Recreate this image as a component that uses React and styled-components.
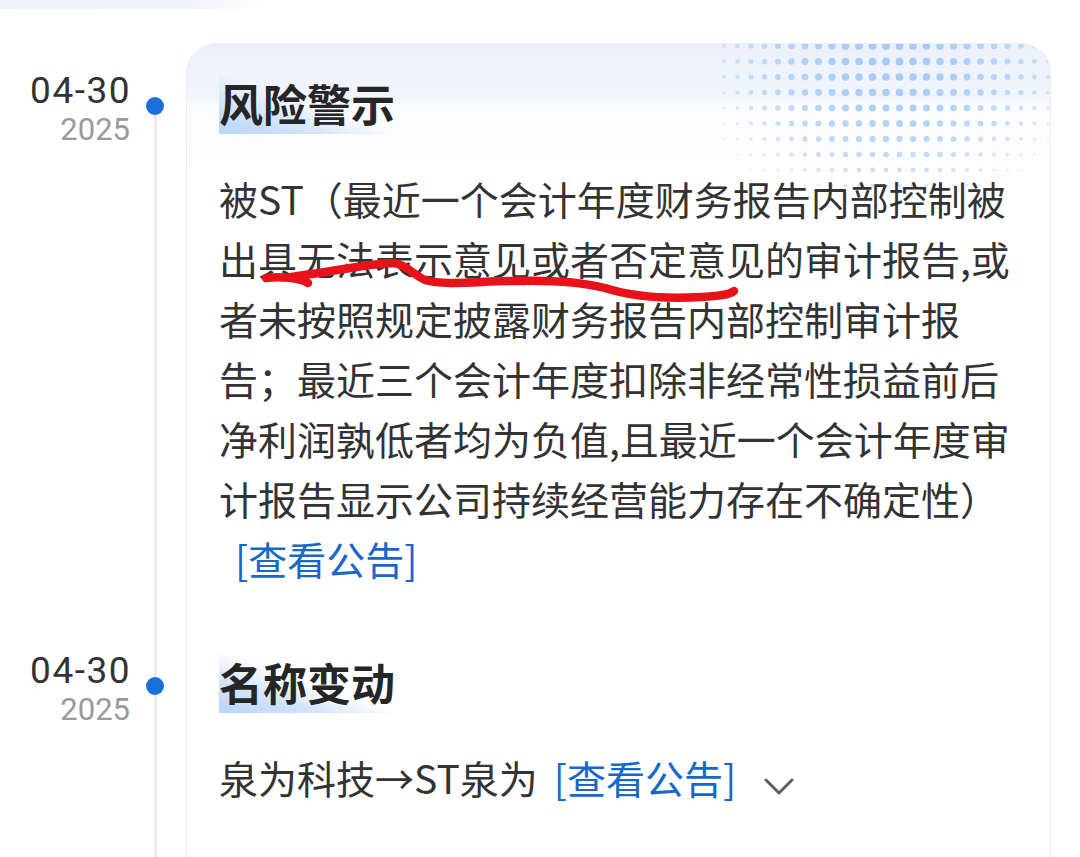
import styled, { createGlobalStyle } from 'styled-components';

const GlobalStyle = createGlobalStyle`
  html, body {
    margin: 0;
    padding: 0;
    background: #ffffff;
  }
  body {
    font-family: "Noto Sans CJK SC", "Noto Sans", sans-serif;
    color: #333333;
  }
`;

const events = [
  {
    day: '04-30',
    year: '2025',
    title: '风险警示',
    text:
      '被ST（最近一个会计年度财务报告内部控制被出具无法表示意见或者否定意见的审计报告,或者未按照规定披露财务报告内部控制审计报告；最近三个会计年度扣除非经常性损益前后净利润孰低者均为负值,且最近一个会计年度审计报告显示公司持续经营能力存在不确定性）',
    marked: true,
  },
  {
    day: '04-30',
    year: '2025',
    title: '名称变动',
    text: '泉为科技→ST泉为',
    more: true,
  },
];

function DotField() {
  const dots = [];
  for (let j = 0; j < 10; j++) {
    for (let i = 0; i < 25; i++) {
      const x = 6 + i * 13.5;
      const y = 2 + j * 15.5;
      const dx = (x - 172) / 215;
      const dy = (y - 10) / 175;
      const f = 1 - (dx * dx + dy * dy) * 1.1;
      if (f <= 0.05) continue;
      dots.push(
        <circle key={`${i}-${j}`} cx={x} cy={y} r={1 + 2.9 * f} fill="#a6cbf7" opacity={0.15 + 0.85 * f} />
      );
    }
  }
  return (
    <DotSvg width="332" height="150" viewBox="0 0 332 150">
      {dots}
    </DotSvg>
  );
}

function Scribble() {
  return (
    <ScribbleSvg width="800" height="200" viewBox="0 0 800 200">
      <path
        d="M47 110 C62 108 80 110 89 115 M72 109 C110 104 150 96 172 95 C186 95 193 106 206 112 C226 118 262 113 296 113 C332 112 362 114 386 120 C411 128 446 131 482 129 C500 128 510 127 515 123"
        fill="none"
        stroke="#e8121b"
        strokeWidth="8.5"
        strokeLinecap="round"
        strokeLinejoin="round"
      />
    </ScribbleSvg>
  );
}

export default function App() {
  return (
    <Page lang="zh-CN">
      <GlobalStyle />
      <TopFade />
      <Timeline>
        {events.map((ev, idx) => (
          <Item key={idx}>
            <DateCol>
              <Day>{ev.day}</Day>
              <Year>{ev.year}</Year>
            </DateCol>
            <Rail $first={idx === 0}>
              <Dot />
            </Rail>
            <Panel $first={idx === 0} $last={idx === events.length - 1}>
              {idx === 0 && <DotField />}
              <Title>{ev.title}</Title>
              <Body>
                {ev.text}
                <Link>[查看公告]</Link>
                {ev.more && (
                  <Chevron width="30" height="18" viewBox="0 0 30 18">
                    <polyline points="2,2 15,15 28,2" fill="none" stroke="#5f5f5f" strokeWidth="3" strokeLinecap="round" strokeLinejoin="round" />
                  </Chevron>
                )}
                {ev.marked && <Scribble />}
              </Body>
            </Panel>
          </Item>
        ))}
      </Timeline>
    </Page>
  );
}

const Page = styled.div`
  width: 1080px;
  height: 857px;
  overflow: hidden;
`;

const TopFade = styled.div`
  width: 270px;
  height: 9px;
  background: linear-gradient(90deg, #edf2fc 0%, #f0f4fd 70%, rgba(255, 255, 255, 0) 100%);
`;

const Timeline = styled.div`
  margin-top: 34px;
  display: flex;
  flex-direction: column;
`;

const Item = styled.div`
  display: flex;
  align-items: stretch;
`;

const DateCol = styled.div`
  width: 130px;
  flex: none;
  padding-top: 28px;
  text-align: right;
  font-family: Roboto, "Noto Sans CJK SC", sans-serif;
`;

const Day = styled.div`
  font-size: 37px;
  line-height: 40px;
  color: #333333;
  letter-spacing: 1.5px;
  margin-right: -1px;
`;

const Year = styled.div`
  font-size: 31px;
  line-height: 38px;
  color: #9a9a9a;
`;

const Rail = styled.div`
  position: relative;
  width: 56px;
  flex: none;

  &::before {
    content: '';
    position: absolute;
    left: 24px;
    width: 3px;
    top: ${(p) => (p.$first ? '70px' : '0')};
    bottom: 0;
    background: #ececec;
  }
`;

const Dot = styled.div`
  position: relative;
  width: 18px;
  height: 18px;
  margin: 54px 0 0 16px;
  border-radius: 50%;
  background: #1a6fdc;
`;

const Panel = styled.div`
  position: relative;
  overflow: hidden;
  width: 800px;
  padding: 30px 31px ${(p) => (p.$last ? '120px' : '35px')} 32px;
  border-left: 1px solid #eaecf0;
  border-right: 1px solid #eaecf0;
  border-top: ${(p) => (p.$first ? '1px solid #eef0f4' : 'none')};
  border-radius: ${(p) => (p.$first ? '30px 30px 0 0' : '0')};
  background: ${(p) =>
    p.$first
      ? 'linear-gradient(180deg, #ebf1fb 0px, #f1f5fd 55px, #fbfcff 62px, #ffffff 140px)'
      : '#ffffff'};
`;

const DotSvg = styled.svg`
  position: absolute;
  top: 0;
  right: 0;
`;

const Title = styled.div`
  position: relative;
  display: inline-block;
  height: 60px;
  font-size: 44px;
  line-height: 58px;
  font-weight: 700;
  color: #262626;
  background: linear-gradient(to top right, #b7d4fa 0%, #d6e6fc 30%, rgba(255, 255, 255, 0) 52%);
`;

const Body = styled.div`
  position: relative;
  margin-top: 34px;
  font-size: 39px;
  line-height: 60px;
  color: #333333;
`;

const Link = styled.span`
  margin-left: 16px;
  white-space: nowrap;
  color: #1768c8;
`;

const Chevron = styled.svg`
  margin-left: 28px;
  vertical-align: -2px;
`;

const ScribbleSvg = styled.svg`
  position: absolute;
  top: 0;
  left: 0;
  pointer-events: none;
`;
